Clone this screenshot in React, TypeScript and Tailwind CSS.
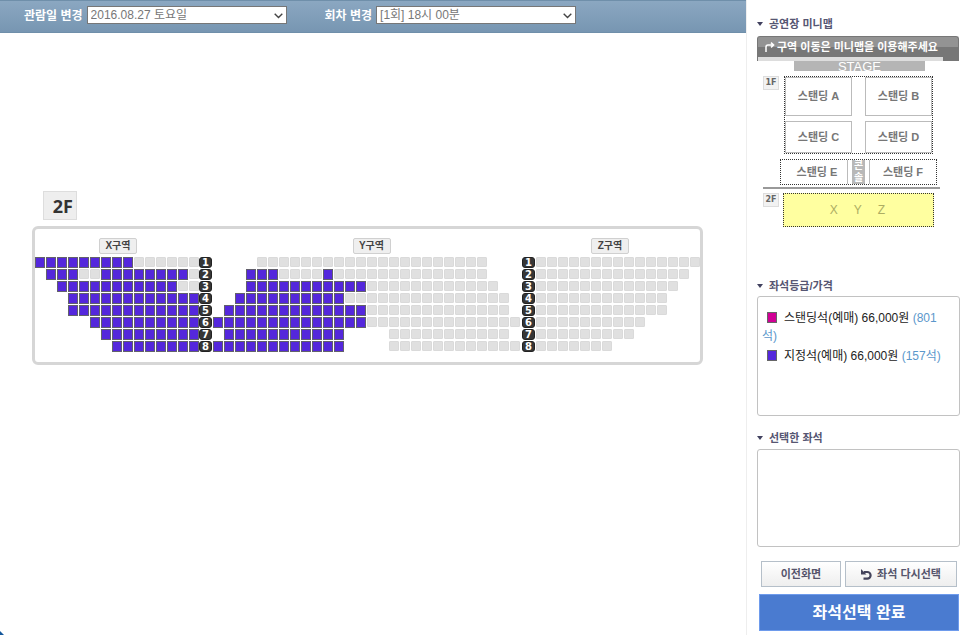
import React from 'react';

// p: on sale, dot: taken, underscore: no seat
const SECTION_X = [
  'ppppppppp......',
  '_ppp..pppppppp.',
  '__ppppppppppp..',
  '___pppppppppppp',
  '___pppppppppppp',
  '_____pppppppppp',
  '______ppppppppp',
  '_______pppppppp',
];

const SECTION_Y = [
  '____.....................___',
  '___ppp....p..............___',
  '___ppppppppppp............__',
  '__pppppppppp..............._',
  '_ppppppppppppp............._',
  'pppppppppppppp..............',
  '_ppppppppppp____..........._',
  'pppppppppppp____............',
];

const SECTION_Z = [
  '...............',
  '.............._',
  '.............__',
  '............___',
  '............___',
  '.........._____',
  '.........______',
  '.......________',
];

function Seats({ cells, name }: { cells: string; name: string }) {
  return (
    <div className="flex gap-px">
      {cells.split('').map((cell, i) => {
        if (cell === 'p') {
          return (
            <button
              key={i}
              type="button"
              aria-label={`${name} ${i + 1}`}
              className="h-[11px] w-[10px] border border-[#62606c] bg-[#5427dc]"
            />
          );
        }
        if (cell === '.') {
          return <span key={i} className="h-[10px] w-[10px] rounded-[1px] border border-[#dadada] bg-[#e0e0e0]" />;
        }
        return <span key={i} className="h-[10px] w-[10px]" />;
      })}
    </div>
  );
}

function RowNumber({ value }: { value: number }) {
  return (
    <span className="flex h-[11px] w-[13px] items-center justify-center rounded-[3px] border border-[#222] bg-[#363636] font-['DejaVu_Sans'] text-[10px] leading-none font-bold text-white">
      {value}
    </span>
  );
}

function SectionLabel({ children }: { children: React.ReactNode }) {
  return (
    <span className="flex h-4 w-[38px] items-center justify-center rounded-[2px] border border-[#d0d0d0] bg-[#efefef] text-[10px] leading-none font-bold text-[#444]">
      {children}
    </span>
  );
}

function SeatMap() {
  return (
    <div className="w-[671px] rounded-md border-3 border-[#d6d6d6] bg-white pt-[9px] pb-[10px]">
      <div className="flex">
        <div className="flex w-[166px] justify-center">
          <SectionLabel>X구역</SectionLabel>
        </div>
        <div className="flex w-[341px] justify-center">
          <SectionLabel>Y구역</SectionLabel>
        </div>
        <div className="flex w-[136px] justify-center">
          <SectionLabel>Z구역</SectionLabel>
        </div>
      </div>
      <div className="mt-[3px] flex flex-col gap-px">
        {SECTION_X.map((row, i) => (
          <div key={i} className="flex h-[11px]">
            <Seats cells={row} name={`X구역 ${i + 1}열`} />
            <RowNumber value={i + 1} />
            <div className="ml-px">
              <Seats cells={SECTION_Y[i]} name={`Y구역 ${i + 1}열`} />
            </div>
            <div className="ml-[2px]">
              <RowNumber value={i + 1} />
            </div>
            <div className="ml-px">
              <Seats cells={SECTION_Z[i]} name={`Z구역 ${i + 1}열`} />
            </div>
          </div>
        ))}
      </div>
    </div>
  );
}

function Picker({ id, label, value }: { id: string; label: string; value: string }) {
  return (
    <div className="flex items-center">
      <label htmlFor={id} className="mr-1 pt-[2px] text-xs leading-4 font-bold whitespace-nowrap text-white">
        {label}
      </label>
      <div className="relative">
        <select
          id={id}
          className="block h-[18px] w-[200px] appearance-none border border-[#777] bg-white pl-[3px] text-xs leading-4 text-[#777]"
        >
          <option>{value}</option>
        </select>
        <svg className="pointer-events-none absolute top-[7px] right-1 h-[6px] w-[9px]" viewBox="0 0 9 6" fill="none" stroke="#444" strokeWidth="1.4">
          <path d="M0.7 0.8 4.5 4.6 8.3 0.8" />
        </svg>
      </div>
    </div>
  );
}

function Heading({ children }: { children: React.ReactNode }) {
  return (
    <h2 className="flex h-4 items-center text-[11px] leading-4 font-bold text-[#565672]">
      <svg className="mr-[6px] h-[4px] w-[6px]" viewBox="0 0 6 4" fill="#41415f">
        <path d="M0 0h6L3 4z" />
      </svg>
      {children}
    </h2>
  );
}

function FloorTag({ children }: { children: React.ReactNode }) {
  return (
    <span className="flex h-[14px] w-4 items-center justify-center border border-[#ddd] bg-[#f2f2f2] font-['DejaVu_Sans'] text-[8px] leading-none font-bold text-[#666]">
      {children}
    </span>
  );
}

function Zone({ children, className }: { children: React.ReactNode; className: string }) {
  return (
    <button type="button" className={`flex items-center justify-center border-[#bbb] bg-white text-[11px] leading-none font-bold text-[#777] ${className}`}>
      {children}
    </button>
  );
}

function MiniMap() {
  return (
    <div className="w-[202px]">
      <div className="flex h-[25px] flex-col rounded-t-[3px] border border-b-0 border-[#777] bg-linear-to-b from-[#939393] from-40% to-[#777] to-40%">
        <p className="flex h-[20px] items-center pt-px pl-[7px] text-[11px] leading-none font-bold whitespace-nowrap text-white">
          <svg className="mr-[2px] h-[11px] w-[10px]" viewBox="0 0 10 11" fill="none" stroke="white" strokeWidth="1.5">
            <path d="M1 10V5Q1 3 3 3H8M6 .6 8.6 3 6 5.4" />
          </svg>
          구역 이동은 미니맵을 이용해주세요
        </p>
        <div className="mr-[15px] h-[4px] bg-[#ddd]" />
      </div>
      <div className="ml-[37px] h-[10px] w-[131px] bg-[#b5b5b5] text-center font-['Liberation_Sans'] text-[13px] leading-[11px] text-white">
        STAGE
      </div>
      <div className="mt-[5px] ml-[6px] flex items-start">
        <FloorTag>1F</FloorTag>
        <div className="ml-[5px] flex w-[149px] flex-col gap-[5px] border border-dotted border-[#333]">
          <div className="flex justify-between">
            <Zone className="h-[39px] w-[67px] border">스탠딩 A</Zone>
            <Zone className="h-[39px] w-[67px] border">스탠딩 B</Zone>
          </div>
          <div className="flex justify-between">
            <Zone className="h-[32px] w-[67px] border">스탠딩 C</Zone>
            <Zone className="h-[32px] w-[67px] border">스탠딩 D</Zone>
          </div>
        </div>
      </div>
      <div className="mt-[5px] ml-[23px] flex h-[26px] w-[157px] justify-between border border-dotted border-[#333]">
        <Zone className="w-[67px] border-r pl-[6px]">스탠딩 E</Zone>
        <span className="flex w-[13px] flex-col items-center justify-center bg-[#b8b8b8] text-[10px] leading-3 font-bold text-white">
          <span>콘</span>
          <span>솔</span>
        </span>
        <Zone className="w-[67px] border-l">스탠딩 F</Zone>
      </div>
      <div className="mt-[2px] ml-[6px] h-[2px] w-[177px] bg-[#999]" />
      <div className="mt-[4px] ml-[6px] flex items-start">
        <FloorTag>2F</FloorTag>
        <button
          type="button"
          className="ml-[4px] flex h-[34px] w-[151px] items-center justify-center gap-4 border border-dotted border-[#333] bg-[#ffffa0] pr-[2px] font-['Liberation_Sans'] text-xs leading-none font-medium text-[#adad63]"
        >
          <span>X</span>
          <span>Y</span>
          <span>Z</span>
        </button>
      </div>
    </div>
  );
}

function Price({ swatch, name, price, left }: { swatch: string; name: string; price: string; left: string }) {
  return (
    <li className="mb-[2px]">
      <span className={`mr-[7px] ml-[5px] inline-block h-[11px] w-[10px] border border-[#666] align-[-1px] ${swatch}`} />
      {name} {price} <span className="text-[#5b97cb]">{left}</span>
    </li>
  );
}

export default function App() {
  return (
    <div className="flex min-h-screen bg-white font-['Liberation_Sans','Noto_Sans_CJK_KR',sans-serif]">
      <main className="relative min-w-0 flex-1">
        <header className="flex h-[33px] gap-[38px] border-y border-[#6f8faa] bg-linear-to-b from-[#8ba7c1] to-[#7796b2] pt-[5px] pl-6">
          <div className="h-[18px]">
            <Picker id="date" label="관람일 변경" value="2016.08.27 토요일" />
          </div>
          <div className="h-[18px]">
            <Picker id="session" label="회차 변경" value="[1회] 18시 00분" />
          </div>
        </header>
        <div className="pt-[158px] pl-8">
          <h1 className="mb-[6px] ml-[11px] flex h-[29px] w-[34px] items-center justify-end border border-[#ddd] bg-[#eee] pr-[3px] font-['Noto_Sans'] text-[18px] leading-none font-bold text-[#333]">
            2F
          </h1>
          <SeatMap />
        </div>
        <svg className="absolute bottom-0 left-0 h-1 w-1" viewBox="0 0 4 4" fill="#14589c">
          <path d="M0 0 4 4H0z" />
        </svg>
      </main>
      <aside className="w-[224px] shrink-0 border-l border-[#eee] px-[10px] pt-4">
        <Heading>공연장 미니맵</Heading>
        <div className="mt-1">
          <MiniMap />
        </div>
        <div className="mt-[51px]">
          <Heading>좌석등급/가격</Heading>
        </div>
        <ul className="mt-[2px] h-[120px] rounded-[3px] border border-[#c2c2c2] pt-3 pr-3 pl-1 text-xs leading-[18px] text-[#222]">
          <Price swatch="bg-[#d10095]" name="스탠딩석(예매)" price="66,000원" left="(801석)" />
          <Price swatch="bg-[#5427dc]" name="지정석(예매)" price="66,000원" left="(157석)" />
        </ul>
        <div className="mt-[14px]">
          <Heading>선택한 좌석</Heading>
        </div>
        <div className="mt-[3px] h-[98px] rounded-[3px] border border-[#c2c2c2]" />
        <div className="mt-[14px] ml-1 flex gap-1">
          <button type="button" className="h-[26px] w-[80px] border border-[#b5bfc9] bg-linear-to-b from-white to-[#eee] text-[11px] leading-none font-bold text-[#55556c]">
            이전화면
          </button>
          <button type="button" className="flex h-[26px] w-[112px] items-center justify-center border border-[#b5bfc9] bg-linear-to-b from-white to-[#eee] text-[11px] leading-none font-bold text-[#55556c]">
            <svg className="mr-[5px] h-[11px] w-[11px]" viewBox="0 0 11 11" fill="none" stroke="#44445c" strokeWidth="2.2">
              <path d="M3 3H6.3A3.3 3.3 0 0 1 6.3 9.6H2.5" />
              <path d="M0 0V5.5H5.5z" fill="#44445c" stroke="none" />
            </svg>
            좌석 다시선택
          </button>
        </div>
        <button type="button" className="mt-[7px] ml-[2px] block h-[37px] w-[200px] border border-[#6e9bec] bg-[#4a7bd0] text-base leading-none font-bold text-white">
          좌석선택 완료
        </button>
      </aside>
    </div>
  );
}
